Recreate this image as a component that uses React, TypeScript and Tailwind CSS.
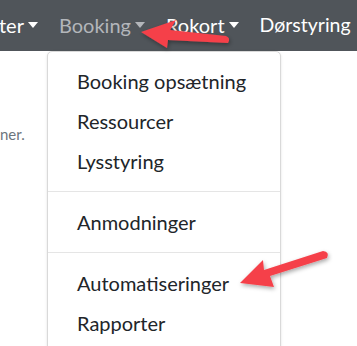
import React from 'react';

const font = { fontFamily: 'Lato, "Liberation Sans", Arial, sans-serif' };

function Caret({ light }: { light?: boolean }) {
  return (
    <span
      className={`ml-[4px] inline-block border-x-[5px] border-t-[6px] border-x-transparent ${
        light ? 'border-t-[#b3b6ba]' : 'border-t-white'
      }`}
    />
  );
}

function Item({ children }: { children: React.ReactNode }) {
  return <div className="flex h-[40px] items-center px-[29px]">{children}</div>;
}

function Divider() {
  return <div className="my-[10px] border-t border-[#e5e5e5]" />;
}

export default function App() {
  return (
    <div className="relative h-[346px] w-[357px] overflow-hidden bg-white" style={font}>
      {/* Navbar */}
      <nav className="flex h-[51px] items-center gap-[21px] whitespace-nowrap bg-[#50555a] pb-[2px] text-[20px] text-white">
        <span className="-ml-[1px] flex items-center">
          ter
          <Caret />
        </span>
        <span className="flex items-center text-[#b3b6ba]">
          Booking
          <Caret light />
        </span>
        <span className="flex items-center">
          Rokort
          <Caret />
        </span>
        <span className="text-[19.5px]">Dørstyring</span>
      </nav>

      {/* Page body */}
      <div className="pt-[72px] text-[15px] text-[#6c757d]">
        <p>ner.</p>
      </div>

      {/* Dropdown */}
      <div className="absolute left-[47px] top-[51px] w-[234px] rounded-t-[5px] border border-[#d9d9d9] bg-white pt-[9px] text-[20px] text-[#212529] shadow-sm">
        <Item>Booking opsætning</Item>
        <Item>Ressourcer</Item>
        <Item>Lysstyring</Item>
        <Divider />
        <Item>Anmodninger</Item>
        <Divider />
        <Item>Automatiseringer</Item>
        <Item>Rapporter</Item>
        <div className="h-[20px]" />
      </div>

      {/* Annotation arrows */}
      <svg className="pointer-events-none absolute inset-0" width="357" height="346">
        <defs>
          <filter id="sh" x="-20%" y="-20%" width="140%" height="140%">
            <feDropShadow dx="1" dy="2" stdDeviation="2" floodColor="#000" floodOpacity="0.35" />
          </filter>
        </defs>
        <g filter="url(#sh)" fill="#f5414a">
          <path d="M141 32 L176 20 L170 30 L226 36 Q231 38 228 43 L168 40 L167 48 Z" />
          <path d="M240 283 L263 260 L264 270 L323 251 Q330 252 327 258 L270 276 L274 287 Z" />
        </g>
      </svg>
    </div>
  );
}
